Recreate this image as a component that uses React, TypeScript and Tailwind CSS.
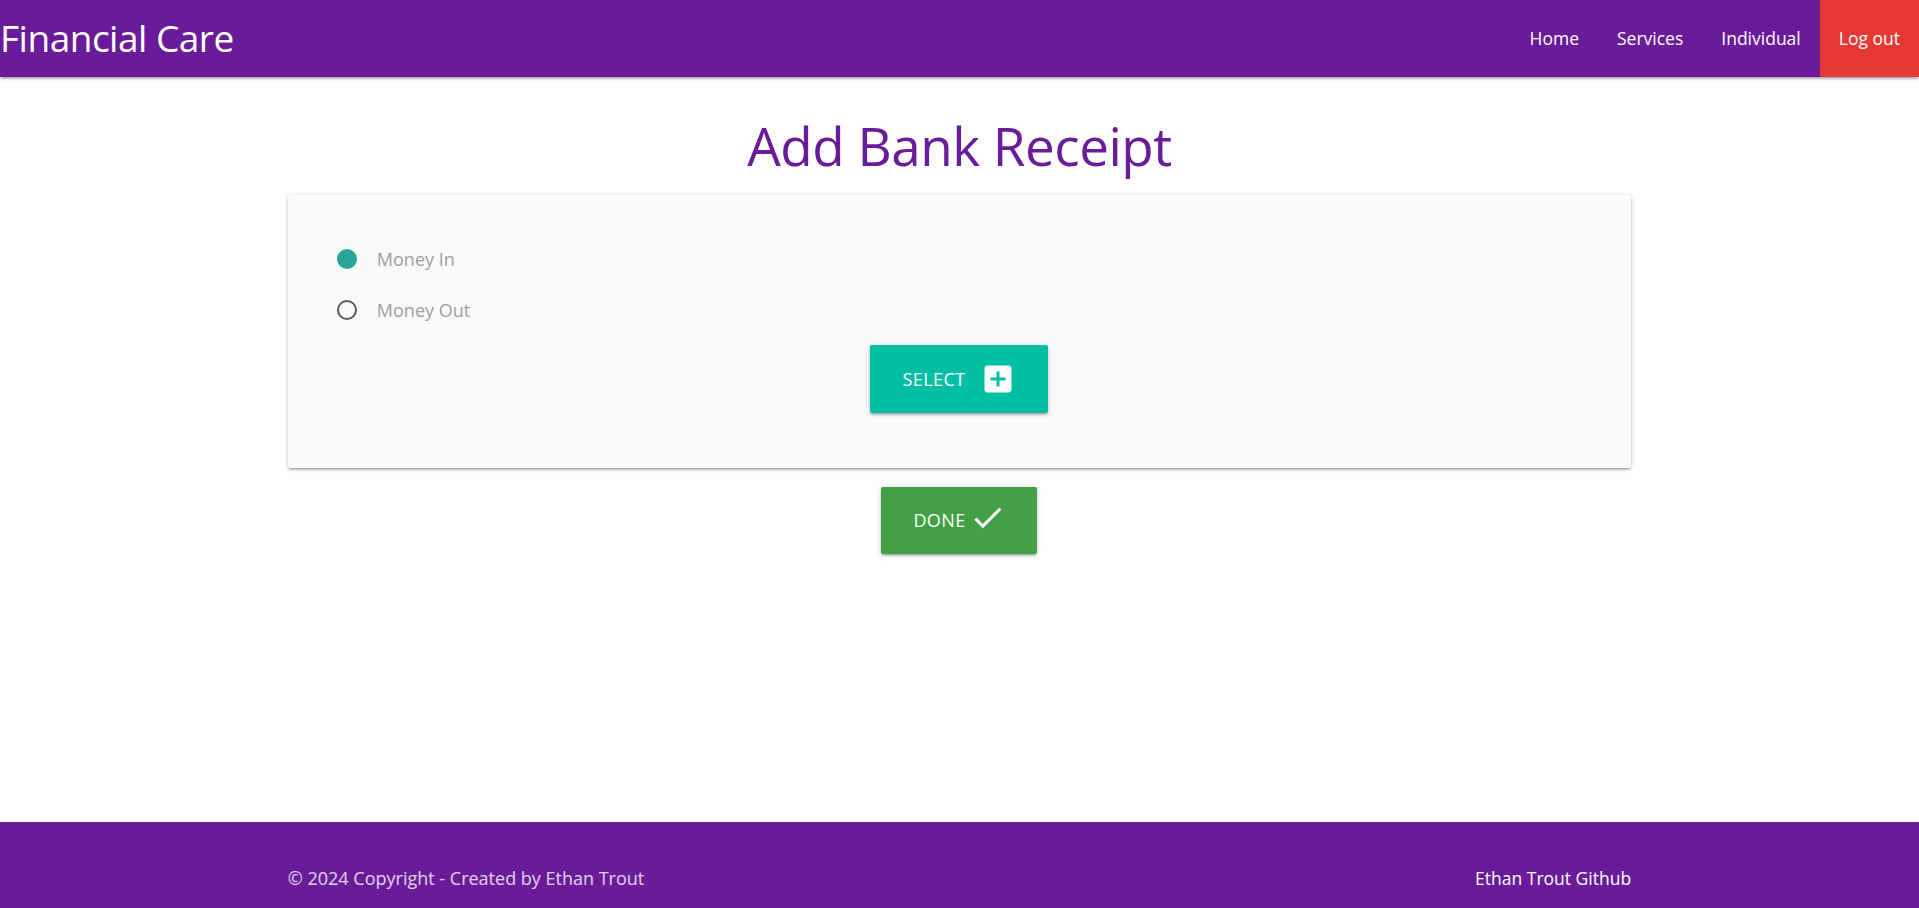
import React, { useState } from "react";

const font = { fontFamily: '"Open Sans", "Noto Sans", sans-serif' };

function Radio({ label, checked, onClick }: { label: string; checked: boolean; onClick: () => void }) {
  return (
    <label className="flex items-center cursor-pointer h-[24px]" onClick={onClick}>
      <span
        className={
          checked
            ? "w-[20px] h-[20px] rounded-full bg-[#26a69a] border-[2px] border-[#26a69a]"
            : "w-[20px] h-[20px] rounded-full border-[2px] border-[#5a5a5a]"
        }
      />
      <span className="ml-[20px] text-[18px] text-[#9e9e9e]">{label}</span>
    </label>
  );
}

export default function App() {
  const [type, setType] = useState("in");

  return (
    <div className="min-h-screen flex flex-col bg-white" style={font}>
      <nav className="h-[77px] bg-[#6a1b9a] flex items-center justify-between shadow-[0_2px_2px_0_rgba(0,0,0,0.14),0_3px_1px_-2px_rgba(0,0,0,0.12),0_1px_5px_0_rgba(0,0,0,0.2)] relative z-10">
        <a className="text-white text-[37px] leading-none -mt-[2px] tracking-[-0.5px]">Financial Care</a>
        <ul className="flex h-full">
          <li className="h-full flex items-center px-[19px] text-white text-[17.5px]">Home</li>
          <li className="h-full flex items-center px-[19px] text-white text-[17.5px]">Services</li>
          <li className="h-full flex items-center px-[19px] text-white text-[17.5px]">Individual</li>
          <li className="h-full flex items-center px-[19px] text-white text-[17.5px] bg-[#e53935]">Log out</li>
        </ul>
      </nav>

      <main className="flex-1">
        <div className="w-[70%] mx-auto">
          <h3 className="text-center text-[#6a1b9a] text-[53px] leading-[62px] mt-[38px] mb-[18px] tracking-[-0.5px]">
            Add Bank Receipt
          </h3>
          <div className="bg-[#fafafa] rounded-[2px] shadow-[0_2px_2px_0_rgba(0,0,0,0.14),0_3px_1px_-2px_rgba(0,0,0,0.12),0_1px_5px_0_rgba(0,0,0,0.2)] pt-[52px] pb-[55px] px-[49px]">
            <div className="flex flex-col gap-[27px]">
              <Radio label="Money In" checked={type === "in"} onClick={() => setType("in")} />
              <Radio label="Money Out" checked={type === "out"} onClick={() => setType("out")} />
            </div>
            <div className="flex justify-center mt-[23px]">
              <button className="h-[68px] w-[178px] bg-[#00bfa5] text-white rounded-[2px] flex items-center justify-center gap-[15px] text-[18px] tracking-[0.4px] uppercase shadow-[0_2px_2px_0_rgba(0,0,0,0.14),0_3px_1px_-2px_rgba(0,0,0,0.12),0_1px_5px_0_rgba(0,0,0,0.2)]">
                <span>Select</span>
                <svg width="36" height="36" viewBox="0 0 24 24" fill="#ffffff">
                  <path d="M19 3H5c-1.11 0-2 .9-2 2v14c0 1.1.89 2 2 2h14c1.1 0 2-.9 2-2V5c0-1.1-.9-2-2-2zm-2 10h-4v4h-2v-4H7v-2h4V7h2v4h4v2z" />
                </svg>
              </button>
            </div>
          </div>
          <div className="flex justify-center mt-[19px]">
            <button className="h-[67px] w-[156px] bg-[#43a047] text-white rounded-[2px] flex items-center justify-center gap-[3px] text-[18px] tracking-[0.4px] uppercase shadow-[0_2px_2px_0_rgba(0,0,0,0.14),0_3px_1px_-2px_rgba(0,0,0,0.12),0_1px_5px_0_rgba(0,0,0,0.2)]">
              <span>Done</span>
              <svg width="37" height="37" viewBox="0 0 24 24" fill="#ffffff" className="-mt-[6px]">
                <path d="M9 16.17L4.83 12l-1.42 1.41L9 19 21 7l-1.41-1.41z" />
              </svg>
            </button>
          </div>
        </div>
      </main>

      <footer className="h-[86px] bg-[#6a1b9a]">
        <div className="w-[70%] mx-auto flex justify-between pt-[44px] text-[18px] leading-[24px]">
          <span className="text-white/80">© 2024 Copyright - Created by Ethan Trout</span>
          <a className="text-white text-[17.5px]">Ethan Trout Github</a>
        </div>
      </footer>
    </div>
  );
}
